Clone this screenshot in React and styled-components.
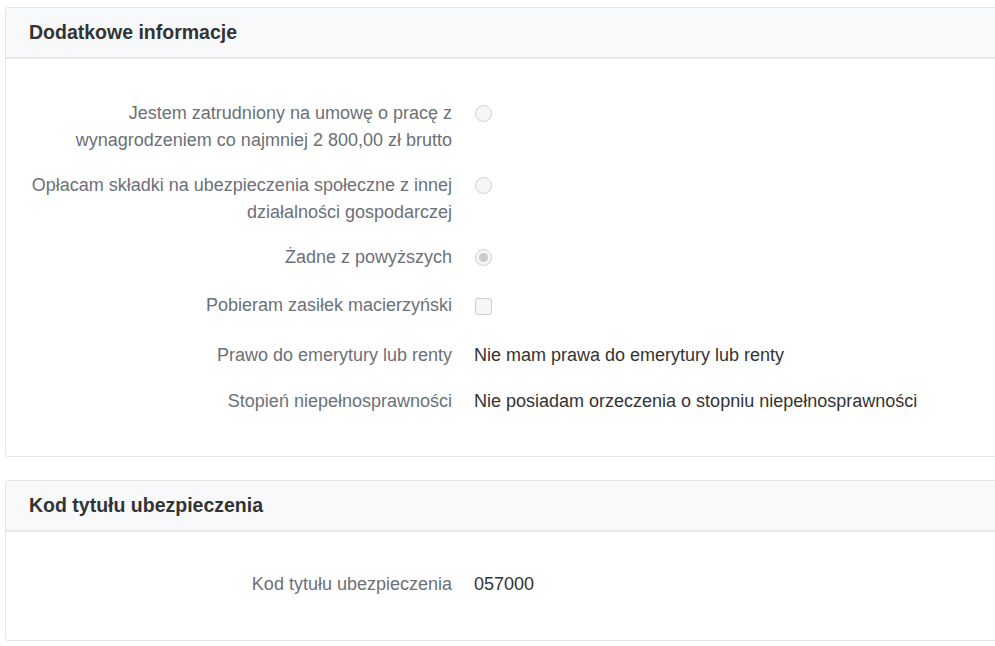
import React from "react";
import styled, { createGlobalStyle } from "styled-components";

const GlobalStyle = createGlobalStyle`
  html, body {
    margin: 0;
    padding: 0;
    background: #fff;
    font-family: "Liberation Sans", Arial, sans-serif;
    overflow: hidden;
  }
`;

const Page = styled.div`
  padding: 7px 0 0 5px;
  overflow: hidden;
`;

const Card = styled.section`
  border: 1px solid #e4e4e4;
  border-radius: 3px;
  margin-right: -12px;
  margin-bottom: 23px;
  background: #fff;
`;

const CardHeader = styled.header`
  height: 49px;
  display: flex;
  align-items: center;
  padding-left: 23px;
  background: #f8f9fb;
  border-bottom: 1px solid #e2e2e2;
  box-shadow: 0 1px 0 #ececec;
  h2 {
    margin: 0;
    font-size: 19.5px;
    font-weight: bold;
    color: #333;
  }
`;

const CardBody = styled.div`
  padding: ${(p) => p.$pad || "42px 0 41px"};
  display: flex;
  flex-direction: column;
  gap: 18px;
`;

const Row = styled.div`
  display: grid;
  grid-template-columns: 446px 1fr;
  column-gap: 22px;
  font-size: 18px;
  line-height: 27px;
  min-height: ${(p) => p.$min || 27}px;
  align-items: start;
`;

const Label = styled.div`
  text-align: right;
  color: #6c7077;
`;

const Value = styled.div`
  color: #333;
`;

const Radio = styled.span`
  display: inline-block;
  width: 15px;
  height: 15px;
  margin: 5px 0 0 1px;
  border-radius: 50%;
  border: 1px solid #cfcfcf;
  background: #f6f6f6;
  position: relative;
  &::after {
    content: "";
    display: ${(p) => (p.$checked ? "block" : "none")};
    position: absolute;
    left: 3px;
    top: 3px;
    width: 9px;
    height: 9px;
    border-radius: 50%;
    background: #cbcbcb;
  }
`;

const Checkbox = styled.span`
  display: inline-block;
  width: 15px;
  height: 15px;
  margin: 6px 0 0 1px;
  border-radius: 3px;
  border: 1px solid #cfcfcf;
  background: #f6f6f6;
`;

export default function App() {
  return (
    <Page>
      <GlobalStyle />
      <Card>
        <CardHeader>
          <h2>Dodatkowe informacje</h2>
        </CardHeader>
        <CardBody>
          <Row>
            <Label>
              Jestem zatrudniony na umowę o pracę z<br />
              wynagrodzeniem co najmniej 2 800,00 zł brutto
            </Label>
            <Value>
              <Radio />
            </Value>
          </Row>
          <Row>
            <Label>
              Opłacam składki na ubezpieczenia społeczne z innej
              <br />
              działalności gospodarczej
            </Label>
            <Value>
              <Radio />
            </Value>
          </Row>
          <Row>
            <Label>Żadne z powyższych</Label>
            <Value>
              <Radio $checked />
            </Value>
          </Row>
          <Row $min={32}>
            <Label>Pobieram zasiłek macierzyński</Label>
            <Value>
              <Checkbox />
            </Value>
          </Row>
          <Row $min={28}>
            <Label>Prawo do emerytury lub renty</Label>
            <Value>Nie mam prawa do emerytury lub renty</Value>
          </Row>
          <Row>
            <Label>Stopień niepełnosprawności</Label>
            <Value>Nie posiadam orzeczenia o stopniu niepełnosprawności</Value>
          </Row>
        </CardBody>
      </Card>
      <Card>
        <CardHeader>
          <h2>Kod tytułu ubezpieczenia</h2>
        </CardHeader>
        <CardBody $pad="40px 0 42px">
          <Row>
            <Label>Kod tytułu ubezpieczenia</Label>
            <Value>057000</Value>
          </Row>
        </CardBody>
      </Card>
    </Page>
  );
}
